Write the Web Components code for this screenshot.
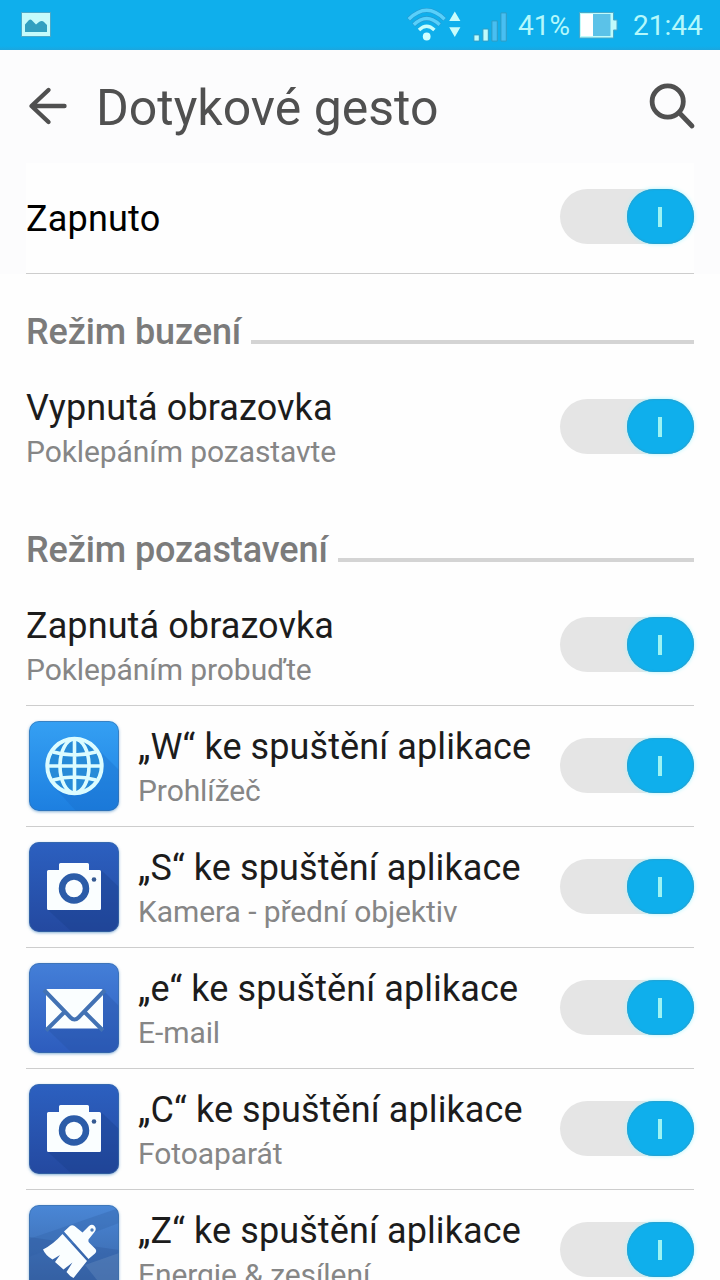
<!DOCTYPE html>
<html lang="cs">
<head>
<meta charset="utf-8">
<title>Dotykové gesto</title>
<style>
    html, body {
        margin: 0;
        height: 1280px;
        overflow: hidden;
        background-color: #fefefe;
        font-family: Roboto, "Noto Sans", sans-serif;
    }
</style>
</head>
<body>
<settings-screen>
    <status-bar slot="status" battery="41%" time="21:44"></status-bar>
    <app-header slot="header">Dotykové gesto</app-header>

    <setting-row slot="main-switch" kind="main" name="Zapnuto"></setting-row>

    <category-header style="height: 93px">Režim buzení</category-header>
    <setting-row kind="last" name="Vypnutá obrazovka" summary="Poklepáním pozastavte"></setting-row>

    <category-header style="height: 97px">Režim pozastavení</category-header>
    <setting-row name="Zapnutá obrazovka" summary="Poklepáním probuďte"></setting-row>
    <setting-row name="„W“ ke spuštění aplikace" summary="Prohlížeč"><app-icon slot="icon" name="globe"></app-icon></setting-row>
    <setting-row name="„S“ ke spuštění aplikace" summary="Kamera - přední objektiv"><app-icon slot="icon" name="camera"></app-icon></setting-row>
    <setting-row name="„e“ ke spuštění aplikace" summary="E-mail"><app-icon slot="icon" name="mail"></app-icon></setting-row>
    <setting-row name="„C“ ke spuštění aplikace" summary="Fotoaparát"><app-icon slot="icon" name="camera"></app-icon></setting-row>
    <setting-row name="„Z“ ke spuštění aplikace" summary="Energie &amp; zesílení"><app-icon slot="icon" name="brush"></app-icon></setting-row>
</settings-screen>

<script>
class SettingsScreen extends HTMLElement {
    constructor() {
        super();
        this.attachShadow({mode: 'open'}).innerHTML = `
            <style>
                :host {
                    display: flex;
                    flex-direction: column;
                    width: 720px;
                    height: 1280px;
                    overflow: hidden;
                }
                .top { background-color: #fcfcfd; flex: none; }
                .main { padding: 0 26px; }
                .list { padding: 0 26px; flex: none; }
            </style>
            <slot name="status"></slot>
            <div class="top">
                <slot name="header"></slot>
                <div class="main"><slot name="main-switch"></slot></div>
            </div>
            <div class="list"><slot></slot></div>
        `;
    }
}

class StatusBar extends HTMLElement {
    constructor() {
        super();
        this.attachShadow({mode: 'open'});
    }

    connectedCallback() {
        this.shadowRoot.innerHTML = `
            <style>
                :host {
                    display: flex;
                    flex: none;
                    align-items: center;
                    box-sizing: border-box;
                    height: 50px;
                    padding: 0 17px 0 21px;
                    background: linear-gradient(#0fafec 46px, #1ba6de);
                    color: #b4f8fb;
                    font-size: 28px;
                    line-height: 50px;
                }
                svg { display: block; flex: none; }
                .wifi { margin-left: auto; }
                .signal { margin-left: 12px; }
                .percent { margin-left: 10px; width: 54px; padding-top: 2px; }
                .battery { margin-left: 7px; }
                .time { margin-left: 15px; width: 70px; padding-top: 2px; }
            </style>
            <svg width="30" height="50" viewBox="21 0 30 50">
                <rect x="21.5" y="12.5" width="29" height="24" fill="#c5fbfb" stroke="#4aa9c9"/>
                <path d="M25 32V24.500l4-4.500q1.300-1 2.600 0l4.400 4.500 3-2.500q3-2 5 0l3 3v7z" fill="#31a0c0"/>
            </svg>
            <svg class="wifi" width="54" height="50" viewBox="407 0 54 50">
                <g fill="none" stroke-width="3.400">
                    <path d="M408.500 19.500q18.200-18.500 36.400 0" stroke="#2898cd" stroke-width="4.600"/>
                    <path d="M408.800 19.200q17.900-18 35.800 0" stroke="#58d0fb"/>
                    <path d="M413.500 25q13.200-13 26.400 0" stroke="#2898cd" stroke-width="4.600"/>
                    <path d="M413.800 24.700q12.900-12.400 25.800 0" stroke="#58d0fb"/>
                    <path d="M419 30q7.700-7.600 15.400 0" stroke="#c8fcfb"/>
                </g>
                <circle cx="426.700" cy="36.500" r="3.900" fill="#d0ffff"/>
                <path d="M454.800 11.500l5.600 9.500h-11.200zM454.800 37l5.600-9.700h-11.200z" fill="#c8fcfb"/>
            </svg>
            <svg class="signal" width="35" height="50" viewBox="473 0 35 50">
                <g stroke="#2f9cc4" stroke-width="1">
                    <path d="M473.900 34.900h5.400v6.200h-5.400zM482.900 29h5.400v12.100h-5.400z" fill="#c0fbfb"/>
                    <path d="M491.900 20.900h5.400v20.200h-5.400zM500.900 12.900h5.400v28.200h-5.400z" fill="#48bff2"/>
                </g>
            </svg>
            <span class="percent">${this.getAttribute('battery')}</span>
            <svg class="battery" width="39" height="50" viewBox="579 0 39 50">
                <path d="M579.500 12.500h34v7.500h3.500v10h-3.500v8h-34z" fill="#c0fbfb" stroke="#4aa9c9"/>
                <path d="M581 14h12v22h-12z" fill="#fff"/>
                <path d="M593 14h17.500v22H593z" fill="#5bc2e8"/>
            </svg>
            <span class="time">${this.getAttribute('time')}</span>
        `;
    }
}

class AppHeader extends HTMLElement {
    constructor() {
        super();
        this.attachShadow({mode: 'open'}).innerHTML = `
            <style>
                :host {
                    display: flex;
                    align-items: center;
                    box-sizing: border-box;
                    height: 113px;
                    padding: 0 24px 0 28px;
                    color: #505050;
                }
                h1 {
                    flex: 1;
                    margin: 3px 0 0 28px;
                    font-size: 50px;
                    font-weight: 400;
                    line-height: 60px;
                    white-space: nowrap;
                }
                svg { display: block; fill: none; stroke: #505050; stroke-linecap: round; }
            </style>
            <svg width="40" height="113" viewBox="28 50 40 113" stroke-width="4.400" stroke-linejoin="round">
                <path d="M48.500 90L31.500 106l17 16M32 106h32.500"/>
            </svg>
            <h1><slot></slot></h1>
            <svg width="48" height="113" viewBox="648 50 48 113" stroke-width="4.800">
                <circle cx="667.700" cy="101.500" r="15.600"/>
                <path d="M679.500 113L692 126"/>
            </svg>
        `;
    }
}

class ToggleSwitch extends HTMLElement {
    constructor() {
        super();
        this.attachShadow({mode: 'open'}).innerHTML = `
            <style>
                :host {
                    display: flex;
                    flex: none;
                    justify-content: flex-end;
                    width: 134px;
                    height: 55px;
                    border-radius: 27.5px;
                    background-color: #e5e5e5;
                }
                .knob {
                    display: flex;
                    align-items: center;
                    justify-content: center;
                    box-sizing: border-box;
                    width: 67px;
                    padding-right: 1px;
                    border-radius: 27.5px;
                    background-color: #0fafec;
                    box-shadow: inset 0 0 1px 1px #26a3d2, 0 0 4px #a9f4ff;
                }
                .mark { width: 4px; height: 20px; background-color: #9df3f3; }
            </style>
            <div class="knob"><div class="mark"></div></div>
        `;
    }
}

class CategoryHeader extends HTMLElement {
    constructor() {
        super();
        this.attachShadow({mode: 'open'}).innerHTML = `
            <style>
                :host {
                    display: flex;
                    align-items: flex-end;
                    gap: 10px;
                    box-sizing: border-box;
                    padding-bottom: 23px;
                    color: #7b7b7b;
                    font-size: 36px;
                    font-weight: 500;
                    line-height: 42px;
                    letter-spacing: -.1px;
                }
                h2 { margin: 0 0 -9px; font: inherit; white-space: nowrap; }
                .line { flex: 1; height: 4px; background-color: #d4d4d4; }
            </style>
            <h2><slot></slot></h2>
            <div class="line"></div>
        `;
    }
}

class SettingRow extends HTMLElement {
    constructor() {
        super();
        this.attachShadow({mode: 'open'});
    }

    connectedCallback() {
        const summary = this.getAttribute('summary');
        const text = document.createElement('div');
        text.className = 'text';
        text.innerHTML = '<div class="name"></div>' + (summary ? '<div class="summary"></div>' : '');
        text.querySelector('.name').textContent = this.getAttribute('name');
        if (summary) {
            text.querySelector('.summary').textContent = summary;
        }

        this.shadowRoot.innerHTML = `
            <style>
                :host {
                    display: flex;
                    align-items: center;
                    box-sizing: border-box;
                    height: 121px;
                    border-bottom: 1px solid #cdcdcd;
                    color: #1c1c1c;
                }
                :host([kind="last"]) { border-color: transparent; }
                :host([kind="main"]) {
                    height: 111px;
                    padding-bottom: 3px;
                    background-color: #fefefe;
                    color: #000;
                }
                .text { flex: 1; padding-top: 5px; white-space: nowrap; }
                .name { font-size: 36px; line-height: 45px; letter-spacing: .1px; }
                .summary { font-size: 30px; line-height: 42px; letter-spacing: -.08px; color: #868686; }
                :host([kind="main"]) .text { padding-top: 6px; }
                :host([kind="main"]) .name { letter-spacing: .2px; }
                toggle-switch { margin-bottom: 1px; }
                :host([kind="main"]) toggle-switch { margin: 0; }
            </style>
            <slot name="icon"></slot>
            <toggle-switch></toggle-switch>
        `;
        this.shadowRoot.insertBefore(text, this.shadowRoot.querySelector('toggle-switch'));
    }
}

const icons = {
    globe: {
        colors: ['#35a0f3', '#1d7fe0'],
        art: `
            <path d="M66 25L90 49V90H47L25 66z" fill="#1769c8" opacity=".3"/>
            <circle cx="45.500" cy="45" r="28" fill="#268bd8"/>
            <g fill="none" stroke="#dcfcff" stroke-width="3.600">
                <circle cx="45.500" cy="45" r="27.200" stroke-width="4"/>
                <ellipse cx="45.500" cy="45" rx="14.500" ry="27"/>
                <path d="M45.500 18v54M18 45h55M24 31q21.500 6 43 0M24 59q21.500-6 43 0"/>
            </g>`
    },
    camera: {
        colors: ['#2c60c0', '#2449a0'],
        art: `
            <path d="M72 28L90 45V90H43L19 68z" fill="#173a86" opacity=".3"/>
            <path d="M30 22.500q0-1.500 1.500-1.500h27q1.500 0 1.500 1.500V28h10.500q1.500 0 1.500 1.500v37q0 1.500-1.500 1.500h-51q-1.500 0-1.500-1.500v-37q0-1.500 1.500-1.500H30z" fill="#fafeff"/>
            <circle cx="45" cy="46.500" r="12" fill="none" stroke="#2b5ca8" stroke-width="6.500"/>
            <circle cx="65" cy="37.500" r="2.300" fill="#355a92"/>`
    },
    mail: {
        colors: ['#447fd8', '#2d5cbd'],
        art: `
            <path d="M74 27L90 43V90H43L17 65z" fill="#234f9f" opacity=".3"/>
            <path d="M18.500 26h54q1.500 0 1.500 1.500v36.500q0 1.500-1.500 1.500h-54q-1.500 0-1.500-1.500V27.500q0-1.500 1.500-1.500z" fill="#fafeff"/>
            <path d="M15 27l26.500 27.500q4 4 8 0L76 27M17 67.500l18.500-18.500M74 67.500L55.500 49" fill="none" stroke="#4272b4" stroke-width="4"/>`
    },
    brush: {
        colors: ['#4a87d6', '#365f9f'],
        art: `
            <path d="M0 34L90 3v15L0 52z" fill="#3467ad" opacity=".4"/>
            <path d="M0 32l90 13v45H0z" fill="#2f5a9e" opacity=".4"/>
            <path d="M56 60l34-12v42H80z" fill="#6d91c4" opacity=".35"/>
            <path d="M35 26.500l6-5.500q2-1.500 4.500 0l8 6.500L60 21q3-2.500 5.500 0 2.500 3 0 6l-6 7.500q-.5 2 .5 3l6 6q2.500 2.500 0 5L59.500 54z" fill="#fafeff"/>
            <path d="M33.500 29L58 56 44.500 73q-4-2-7-6l6-9.500-9 7-8.500-7.500 5-7-7.500 4.500q-7-4-9.500-10 10-5 19.500-15.500z" fill="#fafeff"/>
            <circle cx="63" cy="25" r="1.700" fill="#4b7cba"/>`
    }
};

class AppIcon extends HTMLElement {
    constructor() {
        super();
        this.attachShadow({mode: 'open'});
    }

    connectedCallback() {
        const icon = icons[this.getAttribute('name')];
        this.shadowRoot.innerHTML = `
            <style>
                :host {
                    display: block;
                    flex: none;
                    box-sizing: border-box;
                    width: 90px;
                    height: 90px;
                    margin: 0 19px 0 3px;
                    border-radius: 10px;
                    overflow: hidden;
                    background: linear-gradient(${icon.colors[0]}, ${icon.colors[1]});
                    box-shadow: 0 1px 3px rgba(60, 130, 190, .6);
                }
                svg { display: block; }
            </style>
            <svg width="90" height="90" viewBox="0 0 90 90">
                ${icon.art}
                <rect x=".5" y=".5" width="89" height="89" rx="9.500" fill="none" stroke="#3a6ea5" opacity=".6"/>
            </svg>
        `;
    }
}

customElements.define('settings-screen', SettingsScreen);
customElements.define('status-bar', StatusBar);
customElements.define('app-header', AppHeader);
customElements.define('toggle-switch', ToggleSwitch);
customElements.define('category-header', CategoryHeader);
customElements.define('app-icon', AppIcon);
customElements.define('setting-row', SettingRow);
</script>
</body>
</html>
